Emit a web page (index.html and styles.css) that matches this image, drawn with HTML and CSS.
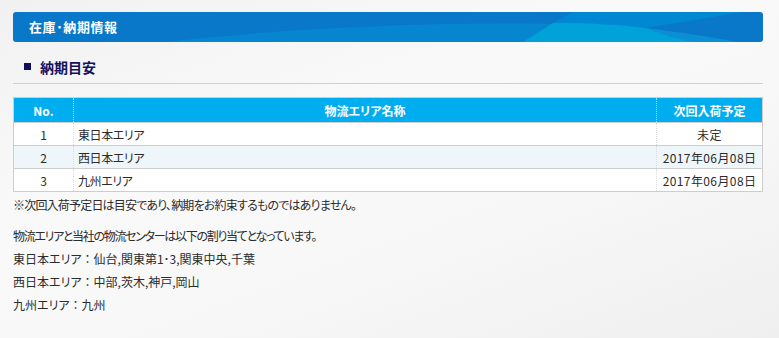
FILE: index.html
```html
<!DOCTYPE html>
<html lang="ja">
<head>
<meta charset="utf-8">
<title>在庫・納期情報</title>
<link rel="stylesheet" href="styles.css">
</head>
<body>
<div class="page">
  <div class="panel-head">
    <svg class="wave" viewBox="0 0 750 30" preserveAspectRatio="none" aria-hidden="true">
      <path d="M150,30 C300,14 480,6 630,16 L722,30 Z" fill="#0786d0"/>
      <path d="M560,0 L730,0 L632,16 C600,13 570,11 540,11 Z" fill="#0089d2"/>
      <path d="M510,30 L540,11 C580,11 610,13 632,16 L722,30 Z" fill="#00a2da"/>
      <path d="M632,16 C680,22 705,26 722,30 L680,30 C660,26 645,21 632,16 Z" fill="#0a8fd2"/>
    </svg>
    <h1 class="panel-title">在庫･納期情報</h1>
  </div>

  <h2 class="section-title"><span class="bullet"></span>納期目安</h2>

  <table class="delivery">
    <thead>
      <tr><th class="c-no">No.</th><th class="c-name">物流エリア名称</th><th class="c-date">次回入荷予定</th></tr>
    </thead>
    <tbody>
      <tr><td class="c-no">1</td><td class="c-name">東日本エリア</td><td class="c-date">未定</td></tr>
      <tr class="alt"><td class="c-no">2</td><td class="c-name">西日本エリア</td><td class="c-date">2017年06月08日</td></tr>
      <tr><td class="c-no">3</td><td class="c-name">九州エリア</td><td class="c-date">2017年06月08日</td></tr>
    </tbody>
  </table>

  <p class="note">※次回入荷予定日は目安であり、納期をお約束するものではありません。</p>

  <div class="areas">
    <p class="lead">物流エリアと当社の物流センターは以下の割り当てとなっています。</p>
    <p>東日本エリア<span class="colon">：</span>仙台,関東第1･3,関東中央,千葉</p>
    <p>西日本エリア<span class="colon">：</span>中部,茨木,神戸,岡山</p>
    <p>九州エリア<span class="colon">：</span>九州</p>
  </div>
</div>
</body>
</html>
```

FILE: styles.css
```css
html, body {
  margin: 0;
  padding: 0;
}
body {
  width: 779px;
  height: 338px;
  overflow: hidden;
  background: linear-gradient(160deg, #f1f1f1 0%, #f9f9f9 35%, #f8f8f8 60%, #efefef 100%);
  font-family: "Noto Sans CJK JP", "Noto Sans", sans-serif;
  font-feature-settings: "palt";
  color: #2b2b2b;
  font-size: 12px;
}
.page {
  width: 750px;
  padding: 12px 0 0 13px;
}
.panel-head {
  position: relative;
  height: 30px;
  border-radius: 3px;
  background: #0a78c8;
  overflow: hidden;
}
.wave {
  position: absolute;
  left: 0;
  top: 0;
  width: 100%;
  height: 100%;
}
.panel-title {
  position: relative;
  margin: 0;
  padding-left: 16px;
  line-height: 30px;
  font-size: 13px;
  font-weight: bold;
  color: #fff;
  letter-spacing: 0.6px;
}
.section-title {
  margin: 14px 0 0;
  padding: 0 0 6px 11px;
  border-bottom: 1px solid #cfcfcf;
  display: flex;
  align-items: center;
  gap: 9px;
  height: 21px;
  font-size: 14px;
  font-weight: bold;
  color: #12125e;
}
.bullet {
  width: 7px;
  height: 7px;
  background: #0e0e5c;
}
.delivery {
  margin-top: 13px;
  width: 750px;
  border-collapse: collapse;
  border: 1px solid #cdcdcd;
  background: #fff;
}
.delivery th {
  height: 24px;
  padding: 0;
  background: #00aeef;
  color: #fff;
  font-weight: bold;
  font-size: 12px;
  text-align: center;
}
.delivery td {
  height: 22px;
  padding: 0;
  border-top: 1px solid #cdcdcd;
  text-align: center;
}
.delivery .c-no {
  width: 59px;
}
.delivery .c-date {
  width: 105px;
}
.delivery td.c-date {
  letter-spacing: 0.4px;
}
.delivery th + th {
  border-left: 1px dotted #a8ddf4;
}
.delivery td + td {
  border-left: 1px dotted #dcdcdc;
}
.delivery td.c-name {
  text-align: left;
  padding-left: 4px;
  letter-spacing: -0.4px;
}
.delivery tr.alt td {
  background: #eef6fa;
}
.note {
  margin: 3px 0 0;
  line-height: 20px;
  letter-spacing: -0.8px;
}
.areas {
  margin-top: 9px;
}
.areas p {
  margin: 0;
  line-height: 23px;
}
.areas .lead {
  letter-spacing: -1.3px;
}
.colon {
  font-feature-settings: normal;
}
```
